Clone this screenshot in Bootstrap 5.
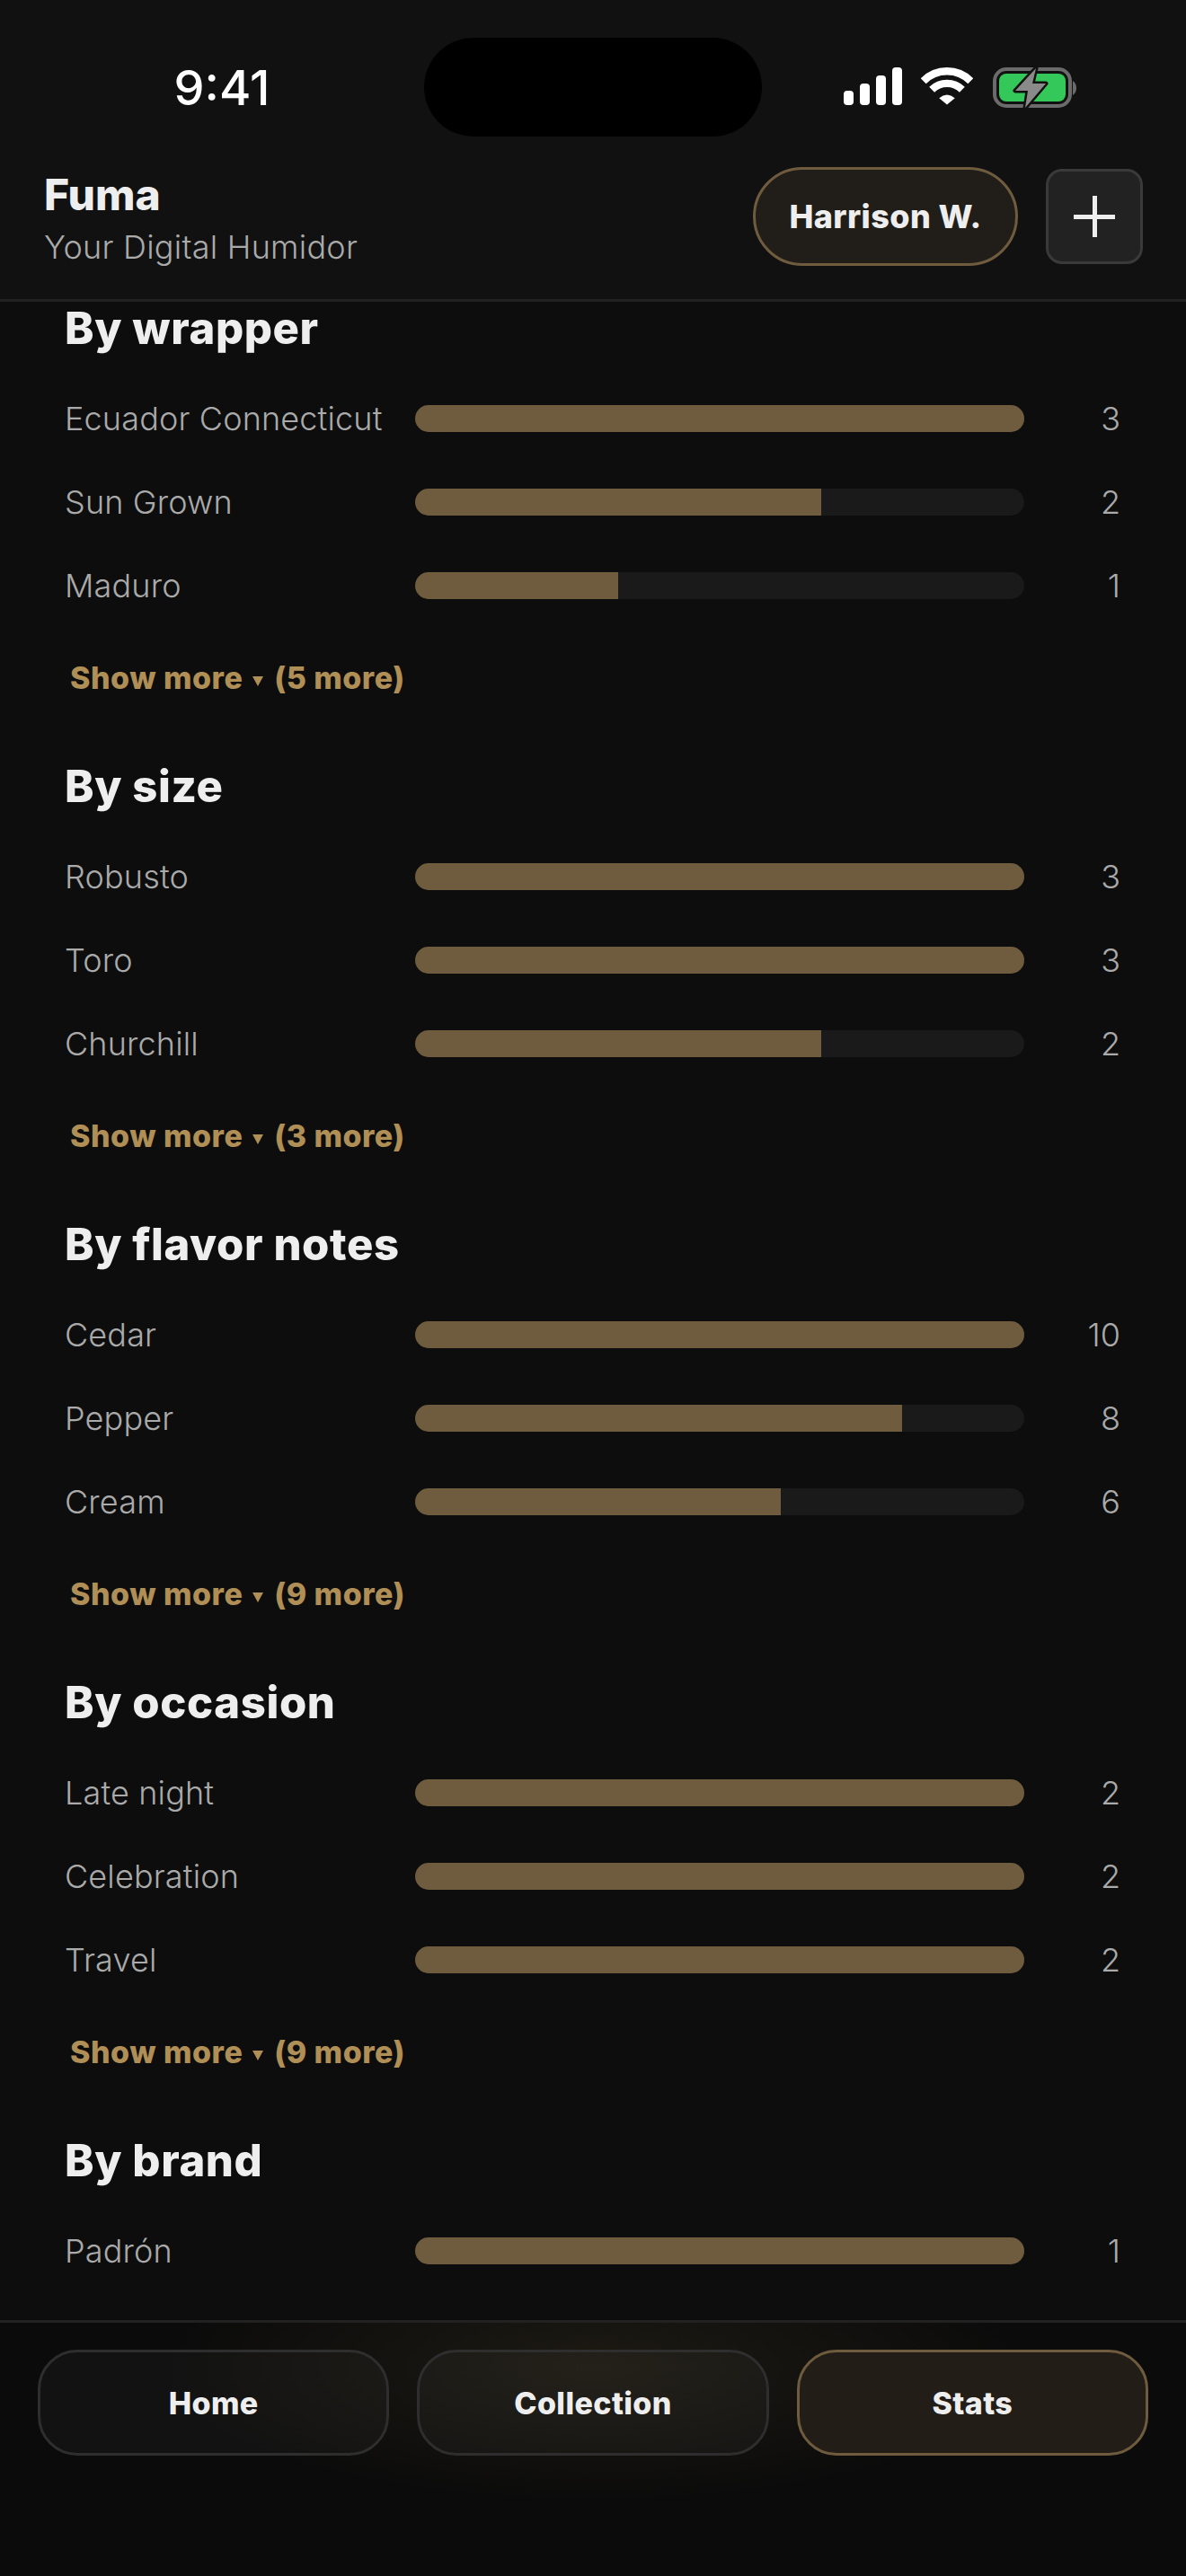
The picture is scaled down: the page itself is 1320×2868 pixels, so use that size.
<!DOCTYPE html>
<html lang="en">
<head>
  <meta charset="UTF-8">
  <title>Fuma Stats</title>
  <link href="https://cdn.jsdelivr.net/npm/bootstrap@5.3.0/dist/css/bootstrap.min.css" rel="stylesheet">
  <style>
    html, body { height: 2868px; overflow: hidden; }
    body { background: #0d0d0d; color: #eee; font-family: Inter, "Liberation Sans", sans-serif; }
    .app-top { background: #111; border-bottom: 3px solid #222; height: 336px; }
    .status-line { height: 186px; display: grid; grid-template-columns: 472px 376px 472px; }
    .clock { font-size: 54px; font-weight: 500; color: #fff; line-height: 1; padding: 71px 0 0 22px; text-align: center; }
    .island { background: #000; border-radius: 55px; height: 110px; margin-top: 42px; }
    .status-icons { padding: 75px 0 0 91px; gap: 20px; }
    .brand-title { font-size: 48px; font-weight: 800; line-height: 56px; color: #eee; margin-top: 4px; }
    .brand-sub { font-size: 36px; font-weight: 300; line-height: 44px; margin-top: 8px; letter-spacing: .25px; color: #aaa; }
    .head-line { padding: 0 48px 0 49px; height: 110px; }
    .user-pill { background: #211e19; border: 3px solid #6f5c3e; color: #eee; border-radius: 55px; width: 295px; height: 110px; font-size: 36px; font-weight: 800; letter-spacing: .4px; padding: 0; }
    .add-btn { background: #222; border: 3px solid #3a3a3a; border-radius: 18px; width: 108px; height: 106px; padding: 0; margin-left: 31px; display: flex; align-items: center; justify-content: center; }
    .stats-main { height: 2247px; overflow: hidden; padding: 1px 73px 0 72px; }
    .stat-block { margin-bottom: 72px; }
    .stat-title { font-size: 49px; font-weight: 800; letter-spacing: .6px; line-height: 58px; margin: 0 0 24px; color: #eee; }
    .stat-row { height: 93px; }
    .stat-label { width: 390px; font-size: 36px; font-weight: 300; letter-spacing: .15px; color: #aaa; }
    .stat-track { --bs-progress-bg: #1a1a1a; --bs-progress-bar-bg: #6f5c3e; --bs-progress-height: 30px; --bs-progress-border-radius: 15px; width: 678px; }
    .stat-count { flex: 1; text-align: end; font-size: 36px; font-weight: 300; color: #aaa; }
    .more-link { display: block; color: #b08f56; font-size: 34px; font-weight: 800; letter-spacing: .5px; line-height: 40px; margin: 37px 0 0 6px; padding: 0; background: none; border: 0; }
    .more-arrow { display: inline-block; width: 0; height: 0; border-left: 6px solid transparent; border-right: 6px solid transparent; border-top: 11px solid #b08f56; margin: 0 4px 0 3px; vertical-align: 3px; }
    .tab-bar { height: 285px; border-top: 3px solid #222; padding: 30px 42px 0; gap: 31px; background: radial-gradient(ellipse 480px 150px at 660px 50px, #1d1a13, transparent), #0b0b0b; }
    .tab-btn { flex: 1; height: 118px; border-radius: 44px; border: 3px solid #2e2e2e; background: rgba(255,255,255,.03); color: #eee; font-size: 34px; font-weight: 800; letter-spacing: .4px; padding: 0; }
    .tab-btn.is-on { background: #221d17; border-color: #6f5c3e; }
  </style>
</head>
<body>
  <div class="app-top">
    <div class="status-line">
      <div class="clock">9:41</div>
      <div class="island"></div>
      <div class="status-icons d-flex align-items-start">
        <svg width="66" height="42" viewBox="0 0 66 42" fill="#fff"><rect x="0" y="26" width="11" height="16" rx="4"/><rect x="18" y="18" width="11" height="24" rx="4"/><rect x="36" y="9" width="11" height="33" rx="4"/><rect x="54" y="0" width="11" height="42" rx="4"/></svg>
        <svg width="58" height="42" viewBox="0 0 172 122" fill="none" stroke="#fff" stroke-width="25"><path d="M8 44A110 110 0 0 1 164 44"/><path d="M36 72A72 72 0 0 1 136 72"/><path d="M86 122L60 100Q86 78 112 100Z" fill="#fff" stroke="none"/></svg>
        <svg width="93" height="46" viewBox="0 0 93 46" style="margin-left:2px"><rect x="2" y="2" width="84" height="41" rx="13" fill="none" stroke="#6b6b6b" stroke-width="4"/><rect x="7" y="7" width="74" height="31" rx="8" fill="#34c759"/><path d="M89 15C92 17 93 20 93 23S92 29 89 31Z" fill="#6b6b6b"/><path d="M48 1L25 26H39L36 45L59 18H44Z" fill="#8a8a8a" stroke="#111" stroke-width="5" stroke-linejoin="round" paint-order="stroke"/></svg>
      </div>
    </div>
    <div class="head-line d-flex align-items-center justify-content-between">
      <div>
        <div class="brand-title">Fuma</div>
        <div class="brand-sub">Your Digital Humidor</div>
      </div>
      <div class="d-flex align-items-center">
        <button class="btn user-pill">Harrison W.</button>
        <button class="btn add-btn" aria-label="Add"><svg width="46" height="46" viewBox="0 0 46 46" fill="#eee"><rect x="21" y="0" width="5" height="46"/><rect x="0" y="21" width="46" height="5"/></svg></button>
      </div>
    </div>
  </div>

  <main class="stats-main">
    <section class="stat-block">
      <h3 class="stat-title">By wrapper</h3>
      <div class="stat-row d-flex align-items-center"><span class="stat-label">Ecuador Connecticut</span><div class="progress stat-track"><div class="progress-bar" style="width:100%"></div></div><span class="stat-count">3</span></div>
      <div class="stat-row d-flex align-items-center"><span class="stat-label">Sun Grown</span><div class="progress stat-track"><div class="progress-bar" style="width:66.7%"></div></div><span class="stat-count">2</span></div>
      <div class="stat-row d-flex align-items-center"><span class="stat-label">Maduro</span><div class="progress stat-track"><div class="progress-bar" style="width:33.3%"></div></div><span class="stat-count">1</span></div>
      <button class="more-link">Show more <i class="more-arrow"></i> (5 more)</button>
    </section>
    <section class="stat-block">
      <h3 class="stat-title">By size</h3>
      <div class="stat-row d-flex align-items-center"><span class="stat-label">Robusto</span><div class="progress stat-track"><div class="progress-bar" style="width:100%"></div></div><span class="stat-count">3</span></div>
      <div class="stat-row d-flex align-items-center"><span class="stat-label">Toro</span><div class="progress stat-track"><div class="progress-bar" style="width:100%"></div></div><span class="stat-count">3</span></div>
      <div class="stat-row d-flex align-items-center"><span class="stat-label">Churchill</span><div class="progress stat-track"><div class="progress-bar" style="width:66.7%"></div></div><span class="stat-count">2</span></div>
      <button class="more-link">Show more <i class="more-arrow"></i> (3 more)</button>
    </section>
    <section class="stat-block">
      <h3 class="stat-title">By flavor notes</h3>
      <div class="stat-row d-flex align-items-center"><span class="stat-label">Cedar</span><div class="progress stat-track"><div class="progress-bar" style="width:100%"></div></div><span class="stat-count">10</span></div>
      <div class="stat-row d-flex align-items-center"><span class="stat-label">Pepper</span><div class="progress stat-track"><div class="progress-bar" style="width:80%"></div></div><span class="stat-count">8</span></div>
      <div class="stat-row d-flex align-items-center"><span class="stat-label">Cream</span><div class="progress stat-track"><div class="progress-bar" style="width:60%"></div></div><span class="stat-count">6</span></div>
      <button class="more-link">Show more <i class="more-arrow"></i> (9 more)</button>
    </section>
    <section class="stat-block">
      <h3 class="stat-title">By occasion</h3>
      <div class="stat-row d-flex align-items-center"><span class="stat-label">Late night</span><div class="progress stat-track"><div class="progress-bar" style="width:100%"></div></div><span class="stat-count">2</span></div>
      <div class="stat-row d-flex align-items-center"><span class="stat-label">Celebration</span><div class="progress stat-track"><div class="progress-bar" style="width:100%"></div></div><span class="stat-count">2</span></div>
      <div class="stat-row d-flex align-items-center"><span class="stat-label">Travel</span><div class="progress stat-track"><div class="progress-bar" style="width:100%"></div></div><span class="stat-count">2</span></div>
      <button class="more-link">Show more <i class="more-arrow"></i> (9 more)</button>
    </section>
    <section class="stat-block">
      <h3 class="stat-title">By brand</h3>
      <div class="stat-row d-flex align-items-center"><span class="stat-label">Padrón</span><div class="progress stat-track"><div class="progress-bar" style="width:100%"></div></div><span class="stat-count">1</span></div>
    </section>
  </main>

  <nav class="tab-bar d-flex align-items-start">
    <button class="btn tab-btn">Home</button>
    <button class="btn tab-btn">Collection</button>
    <button class="btn tab-btn is-on">Stats</button>
  </nav>

  <script src="https://cdn.jsdelivr.net/npm/bootstrap@5.3.0/dist/js/bootstrap.bundle.min.js"></script>
</body>
</html>
